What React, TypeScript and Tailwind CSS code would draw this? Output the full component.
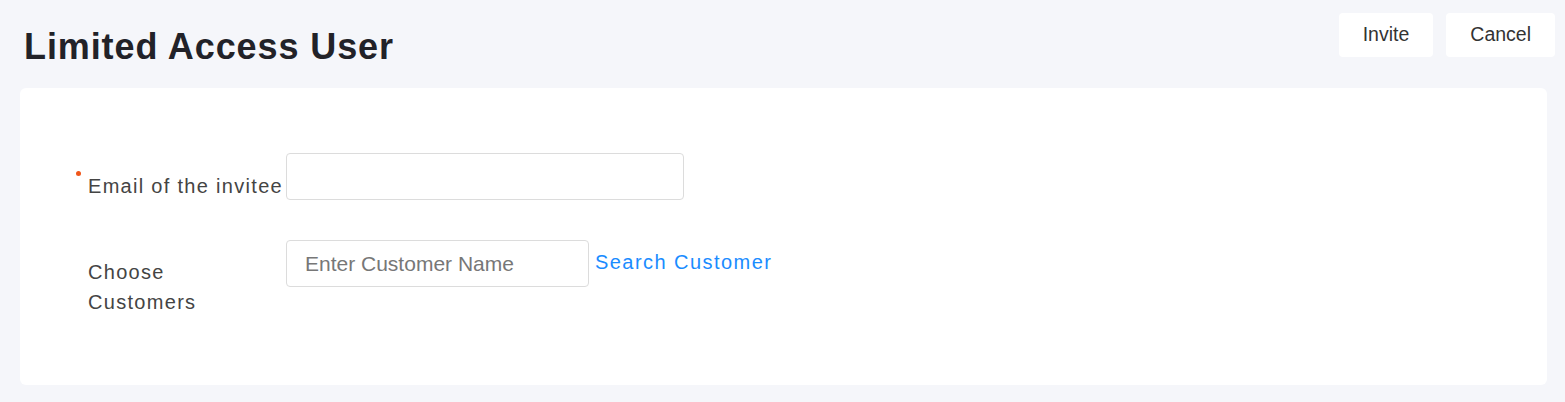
import React from 'react';

export default function App() {
  const font = { fontFamily: '"Liberation Sans", Arial, sans-serif' };

  return (
    <div className="min-h-screen bg-[#f5f6fa] pl-[20px] pr-[18px] pb-[18px]" style={font}>
      <div className="flex h-[88px] items-start justify-between">
        <h1 className="ml-[4px] mt-[27px] text-[36px] font-bold leading-[40px] tracking-[0.9px] text-[#222228]">
          Limited Access User
        </h1>
        <div className="mr-[-8px] mt-[13px] flex gap-[13px]">
          <button className="h-[44px] rounded-[4px] bg-white px-[24px] text-[19.5px] text-[#333]">Invite</button>
          <button className="h-[44px] rounded-[4px] bg-white px-[24px] text-[19.5px] text-[#333]">Cancel</button>
        </div>
      </div>

      <div className="rounded-[6px] bg-white pl-[68px] pt-[65px] pb-[68px]">
        <div className="flex items-start">
          <label className="relative w-[198px] pt-[18px] text-[20px] leading-[30px] tracking-[1.3px] text-[#444]">
            <span className="absolute left-[-12px] top-[18px] h-[5px] w-[5px] rounded-full bg-[#f0561a]" />
            Email of the invitee
          </label>
          <input
            className="h-[47px] w-[398px] rounded-[4px] border border-[#dcdcdc] px-[18px] text-[21px] outline-none"
            type="text"
          />
        </div>

        <div className="mt-[39px] flex items-start">
          <label className="w-[198px] pt-[17px] text-[20px] leading-[30px] tracking-[1.3px] text-[#444]">
            Choose
            <br />
            Customers
          </label>
          <div className="flex items-center gap-[6px]">
            <input
              className="h-[47px] w-[303px] rounded-[4px] border border-[#dcdcdc] px-[18px] text-[21px] text-[#333] placeholder:text-[#777] outline-none"
              placeholder="Enter Customer Name"
              type="text"
            />
            <a className="-mt-[4px] text-[20px] tracking-[1.45px] text-[#1a8cff]" href="#">
              Search Customer
            </a>
          </div>
        </div>
      </div>
    </div>
  );
}
